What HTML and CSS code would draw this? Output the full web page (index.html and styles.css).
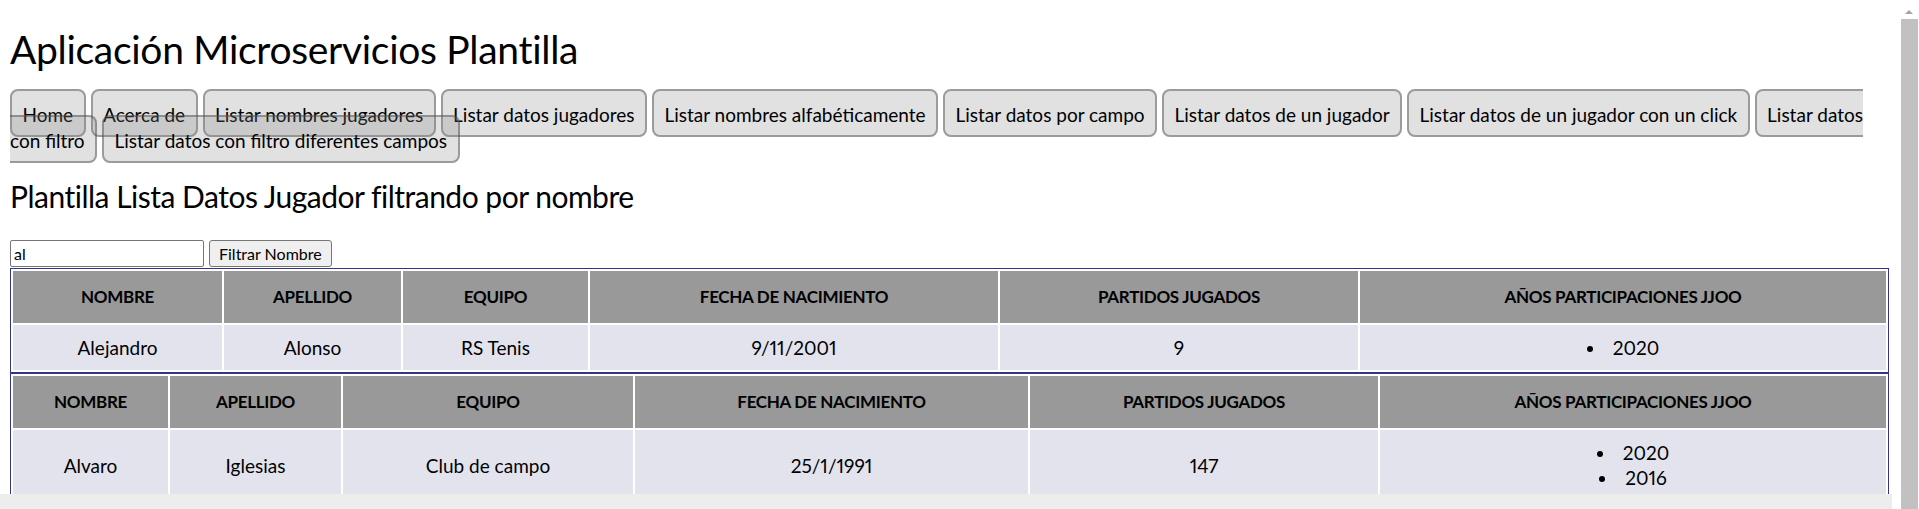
FILE: index.html
```html
<!DOCTYPE html>
<html lang="es">
<head>
<meta charset="utf-8">
<title>Aplicación Microservicios Plantilla</title>
<link rel="stylesheet" href="styles.css">
</head>
<body>
<div class="viewport">
  <div class="page">
    <h1 class="title">Aplicación Microservicios Plantilla</h1>
    <nav class="nav">
      <a href="#">Home</a>
      <a href="#">Acerca de</a>
      <a href="#">Listar nombres jugadores</a>
      <a href="#">Listar datos jugadores</a>
      <a href="#">Listar nombres alfabéticamente</a>
      <a href="#">Listar datos por campo</a>
      <a href="#">Listar datos de un jugador</a>
      <a href="#">Listar datos de un jugador con un click</a>
      <a href="#">Listar datos con filtro</a>
      <a href="#">Listar datos con filtro diferentes campos</a>
    </nav>
    <h2 class="subtitle">Plantilla Lista Datos Jugador filtrando por nombre</h2>
    <form class="filter">
      <input class="filter-input" type="text" value="al">
      <button class="filter-btn" type="button">Filtrar Nombre</button>
    </form>
    <table class="players t1">
      <tr>
        <th>NOMBRE</th><th>APELLIDO</th><th>EQUIPO</th><th>FECHA DE NACIMIENTO</th><th>PARTIDOS JUGADOS</th><th>AÑOS PARTICIPACIONES JJOO</th>
      </tr>
      <tr>
        <td>Alejandro</td><td>Alonso</td><td>RS Tenis</td><td>9/11/2001</td><td>9</td>
        <td><ul class="years"><li>2020</li></ul></td>
      </tr>
    </table>
    <table class="players t2">
      <tr>
        <th>NOMBRE</th><th>APELLIDO</th><th>EQUIPO</th><th>FECHA DE NACIMIENTO</th><th>PARTIDOS JUGADOS</th><th>AÑOS PARTICIPACIONES JJOO</th>
      </tr>
      <tr>
        <td>Alvaro</td><td>Iglesias</td><td>Club de campo</td><td>25/1/1991</td><td>147</td>
        <td><ul class="years"><li>2020</li><li>2016</li></ul></td>
      </tr>
    </table>
  </div>
  <div class="hscroll"></div>
</div>
<div class="vscroll">
  <svg class="vscroll-arrow" width="20" height="17" viewBox="0 0 20 17"><polygon points="6,12 10,8 14,12" fill="#a3a3a3"/></svg>
  <div class="vscroll-thumb"></div>
</div>
</body>
</html>
```
FILE: styles.css
```css
html, body {
  height: 509px;
  overflow: hidden;
}
body {
  margin: 0;
  display: grid;
  grid-template-columns: 1fr 20px;
  font-family: "Lato", "Noto Sans", sans-serif;
  color: #000;
  background: #fff;
}
.viewport {
  display: grid;
  grid-template-rows: 1fr 15px;
  min-height: 0;
  overflow: hidden;
}
.page {
  padding: 0 10px;
  overflow: hidden;
  min-height: 0;
}
.hscroll {
  background: #ededed;
  margin-right: 7px;
}
.vscroll {
  background: #fff;
  display: flex;
  flex-direction: column;
}
.vscroll-arrow {
  display: block;
  flex: none;
  margin-top: 2px;
}
.vscroll-thumb {
  flex: 1;
  margin-left: 2px;
  width: 17px;
  background: #c1c1c1;
}

.title {
  font-size: 39px;
  letter-spacing: -0.3px;
  line-height: 46px;
  font-weight: 400;
  margin: 26px 0 30px;
}

.nav {
  font-size: 19px;
  line-height: 26px;
}
.nav a {
  color: #000;
  text-decoration: none;
  padding: 12px 10.5px 9px;
  border: 2px solid rgba(70, 70, 70, 0.45);
  border-radius: 8px;
  background: rgba(128, 128, 128, 0.24);
}

.subtitle {
  font-size: 30px;
  letter-spacing: -0.5px;
  line-height: 35px;
  font-weight: 400;
  margin: 25px 0 26px;
}

.filter {
  display: flex;
  gap: 5px;
  height: 28px;
  margin: 0;
}
.filter-input {
  box-sizing: border-box;
  width: 194px;
  height: 27px;
  margin: 0;
  padding: 1px 3px;
  border: 1px solid #767676;
  border-radius: 2px;
  font-family: "Lato", sans-serif;
  font-size: 16px;
  color: #000;
}
.filter-btn {
  box-sizing: border-box;
  height: 27px;
  margin: 0;
  padding: 0 9px;
  border: 1px solid #767676;
  border-radius: 3px;
  background: #efefef;
  font-family: "Lato", sans-serif;
  font-size: 16px;
  color: #000;
}

.players {
  width: 100%;
  table-layout: fixed;
  border: 1px solid #34348a;
  border-spacing: 2px;
  font-size: 19px;
  font-variant-numeric: proportional-nums;
}
.players th {
  box-sizing: border-box;
  background: #999999;
  font-size: 17px;
  font-weight: 700;
  letter-spacing: -0.3px;
  line-height: 26px;
  padding: 13px 4px;
  text-align: center;
  color: #000;
}
.players td {
  background: #e3e3ee;
  line-height: 25px;
  padding: 10px 4px;
  text-align: center;
}
.years {
  margin: 0;
  padding: 0;
  list-style-position: inside;
}

.t1 th:nth-child(1) { width: 209px; }
.t1 th:nth-child(2) { width: 177px; }
.t1 th:nth-child(3) { width: 185px; }
.t1 th:nth-child(4) { width: 408px; }
.t1 th:nth-child(5) { width: 358px; }
.t1 th:nth-child(6) { width: 526px; }

.t2 th:nth-child(1) { width: 155px; }
.t2 th:nth-child(2) { width: 171px; }
.t2 th:nth-child(3) { width: 290px; }
.t2 th:nth-child(4) { width: 393px; }
.t2 th:nth-child(5) { width: 348px; }
.t2 th:nth-child(6) { width: 506px; }
```
